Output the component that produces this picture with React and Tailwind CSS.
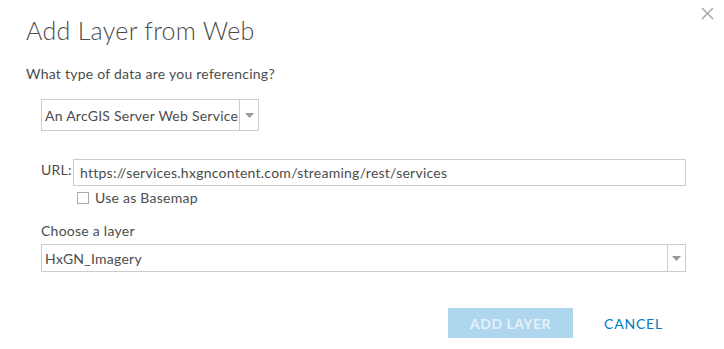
import React from "react"

const font = { fontFamily: "Lato, 'Open Sans', sans-serif" }

function Caret() {
  return (
    <svg width="9" height="5" viewBox="0 0 9 5">
      <path d="M0 0h9L4.5 5z" fill="#999" />
    </svg>
  )
}

export default function App() {
  return (
    <div
      className="relative w-[724px] h-[349px] bg-white text-[#4c4c4c] tracking-[0.25px]"
      style={font}
    >
      <button className="absolute right-[10px] top-[6px] w-[14px] h-[14px] flex items-center justify-center">
        <svg width="13" height="13" viewBox="0 0 13 13">
          <path d="M1 1L12 12M12 1L1 12" stroke="#aaa" strokeWidth="1.6" />
        </svg>
      </button>

      <div className="pl-[26px] pt-[14px]">
        <h1 className="text-[25px] leading-[32px] font-light tracking-[0.3px]">Add Layer from Web</h1>
        <p className="mt-[18px] text-[14px] leading-[20px]">What type of data are you referencing?</p>
      </div>

      <div className="pl-[41px] pr-[38px]">
        <div className="mt-[15px] flex w-[218px] h-[32px] border border-[#ccc]">
          <div className="flex-1 flex items-center pl-[3px] text-[14px] whitespace-nowrap">An ArcGIS Server Web Service</div>
          <div className="w-[19px] border-l border-[#ccc] flex items-center justify-center">
            <Caret />
          </div>
        </div>

        <div className="mt-[28px] flex items-start">
          <label className="w-[32px] text-[14px] leading-[18px] mt-[2px]">URL:</label>
          <div className="flex-1 h-[27px] border border-[#ccc] flex items-center pl-[6px] text-[14px]">
            https://services.hxgncontent.com/streaming/rest/services
          </div>
        </div>
        <div className="mt-[3px] ml-[36px] flex items-center gap-[6px]">
          <span className="w-[12px] h-[12px] border border-[#aaa] bg-white" />
          <span className="text-[14px] leading-[18px]">Use as Basemap</span>
        </div>

        <div className="mt-[14px] text-[14px] leading-[20px]">Choose a layer</div>
        <div className="mt-[3px] flex h-[28px] border border-[#ccc]">
          <div className="flex-1 flex items-center pl-[3px] text-[14px]">HxGN_Imagery</div>
          <div className="w-[18px] border-l border-[#ccc] flex items-center justify-center">
            <Caret />
          </div>
        </div>
      </div>

      <div className="mt-[36px] flex justify-end items-center pr-[61px]">
        <button className="w-[125px] h-[30px] bg-[#aed6ef] text-white/70 text-[14px] font-bold tracking-[0.5px]">
          ADD LAYER
        </button>
        <button className="ml-[31px] text-[#0079c1] text-[14px] tracking-[0.8px]">CANCEL</button>
      </div>
    </div>
  )
}
